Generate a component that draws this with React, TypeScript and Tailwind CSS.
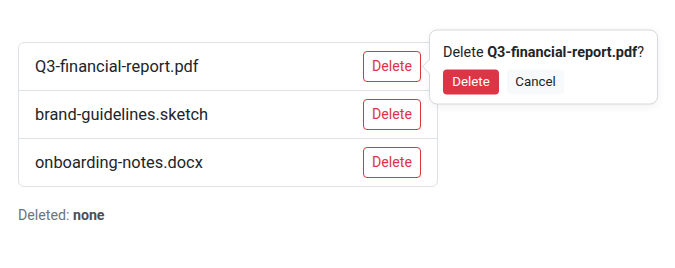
import React from "react";

const files = ["Q3-financial-report.pdf", "brand-guidelines.sketch", "onboarding-notes.docx"];

export default function App() {
  return (
    <div
      className="min-h-[268px] bg-white pl-[18px] pt-[42px] text-[#212529]"
      style={{ fontFamily: '"Segoe UI", Roboto, sans-serif' }}
    >
      <div className="w-[420px] rounded-[6px] border border-[#dee2e6]">
        {files.map((f, i) => (
          <div
            key={f}
            className={`flex items-center justify-between px-4 ${i > 0 ? "h-[48px] border-t border-[#dee2e6]" : "h-[47px]"}`}
          >
            <span className="text-[16.4px] leading-6">{f}</span>
            <div className="relative">
              <button className="h-[31px] w-[58px] rounded-[4px] border border-[#dc3545] text-[14.2px] leading-[21px] text-[#dc3545]">
                Delete
              </button>
              {i === 0 && (
                <div className="absolute left-[calc(100%+8px)] top-1/2 z-10 w-[229px] -translate-y-1/2 rounded-[8px] border border-[#d5d8dc] bg-white px-[13px] pb-[9px] pt-[11px] shadow-[0_2px_8px_rgba(0,0,0,0.06)]">
                  <div className="absolute left-[-8px] top-1/2 h-0 w-0 -translate-y-1/2 border-y-[8px] border-r-[8px] border-y-transparent border-r-[#d5d8dc]" />
                  <div className="absolute left-[-7px] top-1/2 h-0 w-0 -translate-y-1/2 border-y-[7px] border-r-[7px] border-y-transparent border-r-white" />
                  <p className="text-[14.4px] leading-[22px] whitespace-nowrap">
                    Delete <strong className="font-bold">Q3-financial-report.pdf</strong>?
                  </p>
                  <div className="mt-[6px] flex gap-2">
                    <button className="h-[25px] w-[56px] rounded-[4px] bg-[#dc3545] text-[13.3px] text-white">Delete</button>
                    <button className="h-[25px] w-[57px] rounded-[4px] bg-[#f8f9fa] text-[13.3px] text-[#212529]">Cancel</button>
                  </div>
                </div>
              )}
            </div>
          </div>
        ))}
      </div>
      <p className="mt-[18px] text-[14.2px] leading-5 text-[#6c757d]">
        Deleted: <strong className="font-bold text-[#495057]">none</strong>
      </p>
    </div>
  );
}
